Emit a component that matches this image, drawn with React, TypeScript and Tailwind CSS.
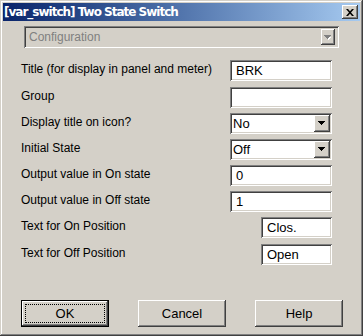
import React from "react";

const raised =
  "shadow-[inset_-1px_-1px_#404040,inset_1px_1px_#ffffff,inset_-2px_-2px_#808080,inset_2px_2px_#d4d0c8]";
const sunken =
  "shadow-[inset_1px_1px_#808080,inset_-1px_-1px_#ffffff,inset_2px_2px_#404040,inset_-2px_-2px_#d4d0c8]";

function Arrow({ gray }: { gray?: boolean }) {
  return (
    <svg width="8" height="5" viewBox="0 0 8 5">
      {gray && <path d="M2 2h5v1h-1v1h-1v1h-1v-1h-1v-1h-1z" fill="#ffffff" />}
      <path d="M0 0h7v1h-1v1h-1v1h-1v1h-1v-1h-1v-1h-1v-1h-1z" fill={gray ? "#808080" : "#000000"} />
    </svg>
  );
}

function TextField({ value, wide = true }: { value: string; wide?: boolean }) {
  return (
    <div
      className={`h-[21px] ${wide ? "w-[102px]" : "w-[71px]"} bg-white ${sunken} flex items-center pl-[6px] text-[13px] text-black`}
    >
      {value}
    </div>
  );
}

function Combo({ value }: { value: string }) {
  return (
    <div className={`h-[21px] w-[102px] bg-white ${sunken} flex items-center pl-[3px] pr-[2px] text-[13px] text-black`}>
      <span className="flex-1">{value}</span>
      <div className={`h-[17px] w-[16px] bg-[#d4d0c8] ${raised} flex items-center justify-center`}>
        <Arrow />
      </div>
    </div>
  );
}

function Row({ label, children, className = "" }: { label: string; children: React.ReactNode; className?: string }) {
  return (
    <div className={`flex items-start h-[21px] ${className}`}>
      <span className="w-[209px] pt-[1px] text-[12px] text-black leading-[16px]">{label}</span>
      <div className="flex-1 flex justify-end pr-[28px]">{children}</div>
    </div>
  );
}

function Button({ label, isDefault }: { label: string; isDefault?: boolean }) {
  if (isDefault) {
    return (
      <div className="w-[88px] h-[27px] border border-black">
        <div className={`w-full h-full bg-[#d4d0c8] ${raised} p-[3px]`}>
          <div className="w-full h-full border border-dotted border-black flex items-center justify-center text-[13px] text-black">
            {label}
          </div>
        </div>
      </div>
    );
  }
  return (
    <div className={`w-[88px] h-[27px] bg-[#d4d0c8] ${raised} flex items-center justify-center text-[13px] text-black`}>
      {label}
    </div>
  );
}

export default function App() {
  return (
    <div
      className="w-[363px] h-[336px] bg-[#d4d0c8] p-[3px] flex flex-col shadow-[inset_-1px_-1px_#404040,inset_1px_1px_#d4d0c8,inset_-2px_-2px_#808080,inset_2px_2px_#ffffff]"
      style={{ fontFamily: '"Liberation Sans", Arial, sans-serif' }}
    >
      <div className="h-[18px] bg-gradient-to-r from-[#0a246a] to-[#a6caf0] flex items-center pl-[1px] pr-[2px]">
        <span
          className="flex-1 text-white font-bold text-[12px] tracking-[-1px] leading-none"
          style={{ fontFamily: '"DejaVu Sans", Verdana, sans-serif' }}
        >
          [var_switch] Two State Switch
        </span>
        <div className={`w-[16px] h-[14px] bg-[#d4d0c8] ${raised} flex items-center justify-center`}>
          <svg width="8" height="7" viewBox="0 0 8 7">
            <path d="M0 0h2l2 2.2L6 0h2L5 3.5 8 7H6L4 4.8 2 7H0l3-3.5z" fill="#000" />
          </svg>
        </div>
      </div>

      <div className="pl-[21px] pt-[5px]">
        <div className={`w-[315px] h-[22px] ${sunken} flex items-center pl-[5px] pr-[4px] text-[12px] text-[#808080]`}>
          <span className="flex-1">Configuration</span>
          <div className={`h-[16px] w-[14px] ${raised} flex items-center justify-center`}>
            <Arrow gray />
          </div>
        </div>
      </div>

      <div className="flex flex-col gap-[5px] pl-[18px] pt-[12px]">
        <Row label="Title (for display in panel and meter)">
          <TextField value="BRK" />
        </Row>
        <Row label="Group" className="mt-[1px]">
          <TextField value="" />
        </Row>
        <Row label="Display title on icon?">
          <Combo value="No" />
        </Row>
        <Row label="Initial State">
          <Combo value="Off" />
        </Row>
        <Row label="Output value in On state">
          <TextField value="0" />
        </Row>
        <Row label="Output value in Off state">
          <TextField value="1" />
        </Row>
        <Row label="Text for On Position">
          <TextField value="Clos." wide={false} />
        </Row>
        <Row label="Text for Off Position" className="mt-[1px]">
          <TextField value="Open" wide={false} />
        </Row>
      </div>

      <div className="flex pl-[18px] gap-[29px] mt-[35px]">
        <Button label="OK" isDefault />
        <Button label="Cancel" />
        <Button label="Help" />
      </div>
    </div>
  );
}
